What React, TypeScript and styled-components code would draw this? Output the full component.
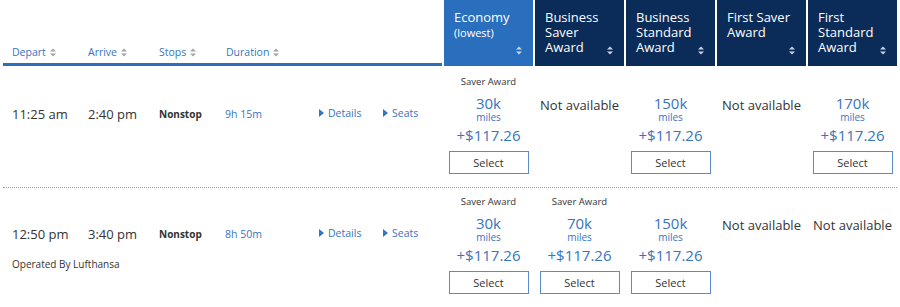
import React from "react";
import styled, { createGlobalStyle } from "styled-components";

const GlobalStyle = createGlobalStyle`
  body {
    margin: 0;
    background: #fff;
    font-family: "Open Sans", "Liberation Sans", sans-serif;
  }
`;

const BLUE = "#3775c0";
const TEXT = "#333";

type Offer = { saver?: boolean; miles?: string; price?: string };

type Flight = {
  depart: string;
  arrive: string;
  duration: string;
  operator?: string;
  offers: Offer[];
};

const columns = [
  { title: "Economy", sub: "(lowest)", active: true },
  { title: "Business Saver Award" },
  { title: "Business Standard Award" },
  { title: "First Saver Award" },
  { title: "First Standard Award" },
];

const flights: Flight[] = [
  {
    depart: "11:25 am",
    arrive: "2:40 pm",
    duration: "9h 15m",
    offers: [
      { saver: true, miles: "30k", price: "+$117.26" },
      {},
      { miles: "150k", price: "+$117.26" },
      {},
      { miles: "170k", price: "+$117.26" },
    ],
  },
  {
    depart: "12:50 pm",
    arrive: "3:40 pm",
    duration: "8h 50m",
    operator: "Operated By Lufthansa",
    offers: [
      { saver: true, miles: "30k", price: "+$117.26" },
      { saver: true, miles: "70k", price: "+$117.26" },
      { miles: "150k", price: "+$117.26" },
      {},
      {},
    ],
  },
];

const SortIcon = ({ color }: { color: string }) => (
  <svg width="6" height="9" viewBox="0 0 6 9">
    <polygon points="0,3.6 3,0.4 6,3.6" fill={color} />
    <polygon points="0,5.4 3,8.6 6,5.4" fill={color} />
  </svg>
);

const Caret = () => (
  <svg width="5" height="8" viewBox="0 0 5 8">
    <polygon points="0,0 5,4 0,8" fill={BLUE} />
  </svg>
);

const App = () => {
  return (
    <Table>
      <GlobalStyle />
      <HeaderRow>
        <LeftHeader>
          {["Depart", "Arrive", "Stops", "Duration"].map((label) => (
            <SortLabel key={label}>
              {label}
              <SortIcon color="#a4a4a4" />
            </SortLabel>
          ))}
        </LeftHeader>
        {columns.map((col) => (
          <ColHeader key={col.title} $active={!!col.active}>
            <ColTitle>
              {col.title}
              {col.sub && <ColSub>{col.sub}</ColSub>}
            </ColTitle>
            <ColSort>
              <SortIcon color="#c9d3e0" />
            </ColSort>
          </ColHeader>
        ))}
      </HeaderRow>

      {flights.map((f, i) => (
        <FlightRow key={f.depart} $first={i === 0}>
          <FlightInfo>
            <InfoLine>
              <Time>{f.depart}</Time>
              <Time>{f.arrive}</Time>
              <Stops>Nonstop</Stops>
              <Duration>{f.duration}</Duration>
              <LinkText>
                <Caret />
                Details
              </LinkText>
              <LinkText>
                <Caret />
                Seats
              </LinkText>
            </InfoLine>
            {f.operator && <Operator>{f.operator}</Operator>}
          </FlightInfo>
          {f.offers.map((o, j) => (
            <OfferCell key={j}>
              <SaverLabel>{o.saver ? "Saver Award" : ""}</SaverLabel>
              {o.miles ? (
                <>
                  <Miles>{o.miles}</Miles>
                  <MilesUnit>miles</MilesUnit>
                  <Price>{o.price}</Price>
                  <SelectButton>Select</SelectButton>
                </>
              ) : (
                <NotAvailable>Not available</NotAvailable>
              )}
            </OfferCell>
          ))}
        </FlightRow>
      ))}
    </Table>
  );
};

export default App;

const Table = styled.div`
  padding: 0 3px;
  width: 894px;
`;

const HeaderRow = styled.div`
  display: grid;
  grid-template-columns: 439px repeat(5, 89px);
  column-gap: 2px;
  height: 64px;
`;

const LeftHeader = styled.div`
  display: grid;
  grid-template-columns: 76px 71px 67px 1fr;
  align-items: end;
  padding: 0 0 4px 9px;
  border-bottom: 3px solid #2c6fbe;
`;

const SortLabel = styled.span`
  display: flex;
  align-items: center;
  gap: 4px;
  font-size: 10.5px;
  line-height: 14px;
  color: ${BLUE};
`;

const ColHeader = styled.div<{ $active: boolean }>`
  display: grid;
  grid-template: 1fr / 1fr;
  padding: 10px 11px 11px 10px;
  background: ${(p) => (p.$active ? "#2a6fbe" : "#0b2c59")};
  color: #fff;
`;

const ColTitle = styled.div`
  grid-area: 1 / 1;
  align-self: start;
  font-size: 13px;
  line-height: 15px;
`;

const ColSub = styled.span`
  display: block;
  margin-top: 1px;
  font-size: 11px;
  line-height: 14px;
`;

const ColSort = styled.div`
  grid-area: 1 / 1;
  align-self: end;
  justify-self: end;
  display: flex;
`;

const FlightRow = styled.div<{ $first: boolean }>`
  display: grid;
  grid-template-columns: 439px repeat(5, 89px);
  column-gap: 2px;
  align-items: start;
  padding: ${(p) => (p.$first ? "11px" : "7px")} 0 13px;
  border-top: ${(p) => (p.$first ? "none" : "1px dotted #999")};
`;

const FlightInfo = styled.div`
  padding: 30px 0 0 9px;
`;

const InfoLine = styled.div`
  display: grid;
  grid-template-columns: 76px 71px 66px 94px 64px 1fr;
  align-items: center;
  height: 18px;
`;

const Time = styled.span`
  font-size: 13px;
  color: ${TEXT};
`;

const Stops = styled.span`
  font-size: 10px;
  font-weight: 700;
  color: ${TEXT};
`;

const Duration = styled.span`
  font-size: 10.5px;
  color: ${BLUE};
`;

const LinkText = styled.span`
  display: flex;
  align-items: center;
  gap: 4px;
  font-size: 10.5px;
  color: ${BLUE};
  margin-top: -2px;
`;

const Operator = styled.div`
  margin-top: 14px;
  font-size: 10px;
  color: ${TEXT};
`;

const OfferCell = styled.div`
  display: flex;
  flex-direction: column;
  align-items: center;
  text-align: center;
`;

const SaverLabel = styled.div`
  height: 14px;
  font-size: 9.5px;
  line-height: 14px;
  color: ${TEXT};
`;

const Miles = styled.div`
  margin-top: 6px;
  font-size: 15px;
  line-height: 17px;
  color: ${BLUE};
`;

const MilesUnit = styled.div`
  font-size: 10px;
  line-height: 11px;
  color: ${BLUE};
`;

const Price = styled.div`
  margin-top: 2px;
  font-size: 15px;
  line-height: 20px;
  color: ${BLUE};
`;

const SelectButton = styled.button`
  margin-top: 6px;
  width: 80px;
  height: 23px;
  padding: 0;
  border: 1px solid #5a8cc9;
  background: #fff;
  font-family: "Open Sans", "Liberation Sans", sans-serif;
  font-size: 11px;
  color: ${TEXT};
`;

const NotAvailable = styled.div`
  margin-top: 9px;
  font-size: 13px;
  line-height: 15px;
  color: ${TEXT};
  white-space: nowrap;
`;
